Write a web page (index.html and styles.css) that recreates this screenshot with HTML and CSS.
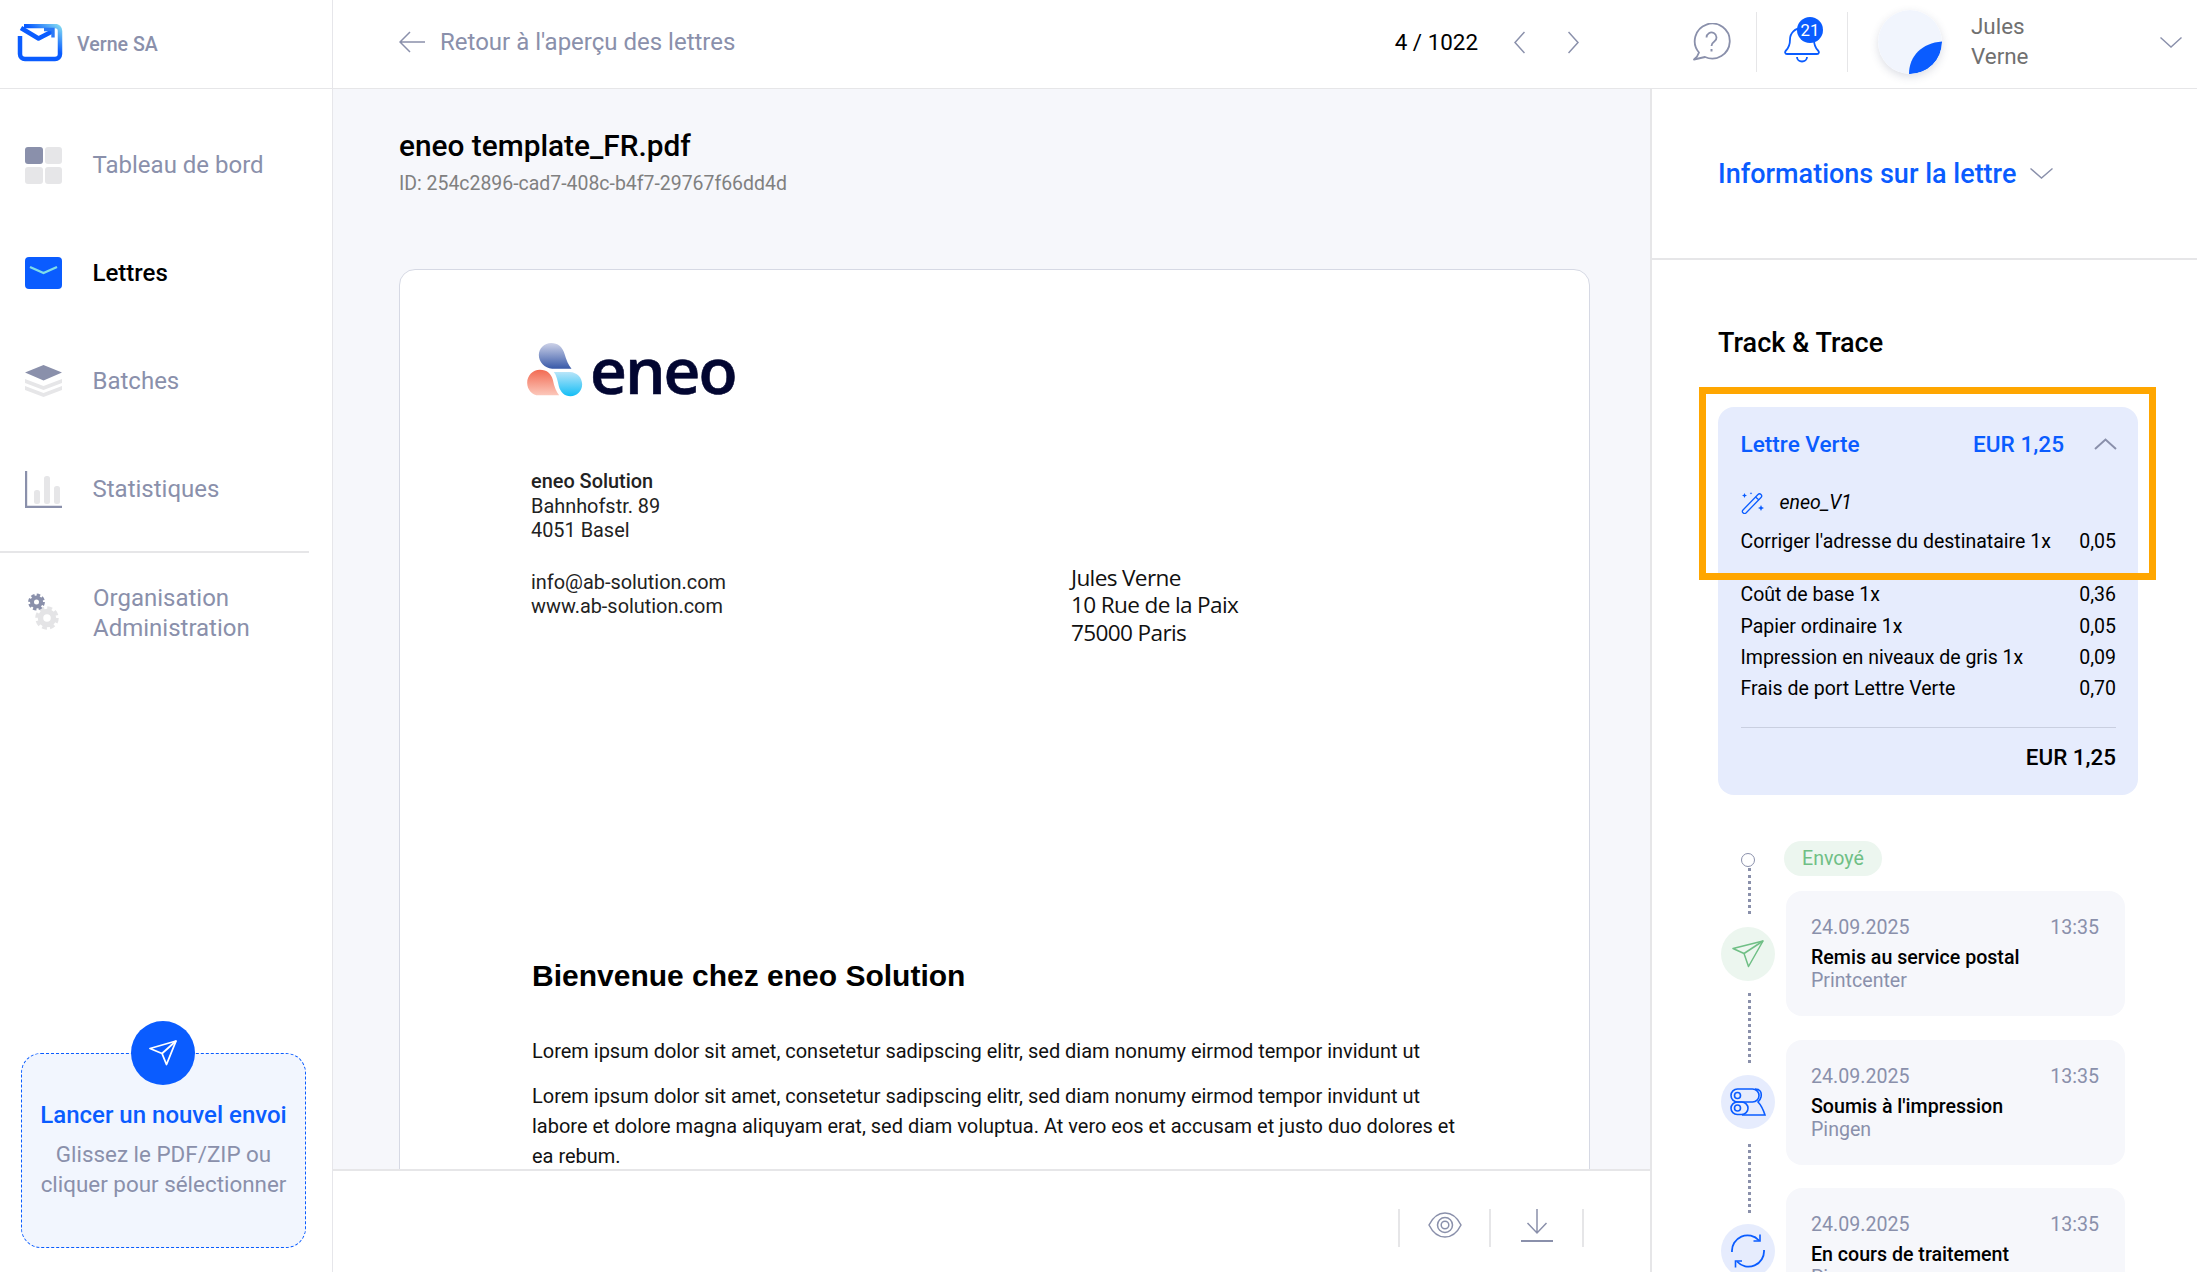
FILE: index.html
```html
<!DOCTYPE html>
<html lang="fr">
<head>
<meta charset="utf-8">
<title>Lettre</title>
<link rel="stylesheet" href="styles.css">
</head>
<body>
<div class="app">
  <aside class="sidebar">
    <div class="brand">
      <svg class="brand-logo" width="46" height="38" viewBox="0 0 46 38" fill="none">
        <defs><linearGradient id="lg" x1="0" y1="1" x2="1" y2="0"><stop offset=".6" stop-color="#0a5cff"/><stop offset="1" stop-color="#7fd6f2"/></linearGradient></defs>
        <path d="M3 12v18a5 5 0 0 0 5 5h30a5 5 0 0 0 5-5V7a5 5 0 0 0-5-5H7" stroke="url(#lg)" stroke-width="4.500"/>
        <path d="M4 4l17.500 10.500L36 7" stroke="#0a5cff" stroke-width="4.500" stroke-linejoin="round"/>
        <path d="M27 5.500h9v8" stroke="#2a78f5" stroke-width="3.400"/>
      </svg>
      <span class="brand-name">Verne SA</span>
    </div>
    <nav class="nav">
      <a class="nav-item">
        <svg class="nav-icon" width="37" height="37" viewBox="0 0 37 37"><rect width="18" height="17" rx="3" fill="#8a90ab"/><rect x="20" width="17" height="17" rx="3" fill="#e6e6e8"/><rect y="20" width="18" height="17" rx="3" fill="#e6e6e8"/><rect x="20" y="20" width="17" height="17" rx="3" fill="#e6e6e8"/></svg>
        <span>Tableau de bord</span>
      </a>
      <a class="nav-item active">
        <svg class="nav-icon" width="37" height="32" viewBox="0 0 37 32"><rect width="37" height="32" rx="4" fill="#0a5cff"/><path d="M5 10l13.500 6L32 10" fill="none" stroke="#7fdde8" stroke-width="2.400"/></svg>
        <span>Lettres</span>
      </a>
      <a class="nav-item">
        <svg class="nav-icon" width="37" height="32" viewBox="0 0 37 32"><path d="M0 14v4l18.500 7L37 18v-4l-18.500 7z" fill="#e6e6e8"/><path d="M0 21v4l18.500 7L37 25v-4l-18.500 7z" fill="#e6e6e8"/><path d="M18.500 0L37 7.500 18.500 15.500 0 7.500z" fill="#8a90ab"/></svg>
        <span>Batches</span>
      </a>
      <a class="nav-item">
        <svg class="nav-icon" width="37" height="37" viewBox="0 0 37 37"><rect x="9" y="19" width="6" height="14" rx="2.500" fill="#e6e6e8"/><rect x="19" y="5" width="6" height="28" rx="2.500" fill="#e6e6e8"/><rect x="29" y="15" width="6" height="18" rx="2.500" fill="#e6e6e8"/><path d="M1 0v36h36" fill="none" stroke="#8a90ab" stroke-width="2.400"/></svg>
        <span>Statistiques</span>
      </a>
    </nav>
    <div class="nav-divider"></div>
    <a class="nav-item org">
      <svg class="org-icon" width="31" height="37" viewBox="0 0 31 37" fill="none">
        <circle cx="19" cy="25" r="6.500" stroke="#e4e4e6" stroke-width="5.500"/><circle cx="19" cy="25" r="10" stroke="#e4e4e6" stroke-width="3.500" stroke-dasharray="4.800 3.050"/>
        <circle cx="8.500" cy="9" r="4.500" stroke="#8a90ab" stroke-width="4"/><circle cx="8.500" cy="9" r="7" stroke="#8a90ab" stroke-width="2.800" stroke-dasharray="3.400 2.100"/>
      </svg>
      <span>Organisation<br>Administration</span>
    </a>
    <div class="upload">
      <div class="upload-btn">
        <svg width="28" height="26" viewBox="0 0 28 26" fill="none" stroke="#fff" stroke-width="1.800" stroke-linejoin="round"><path d="M27 1L1 8.500l12 5 4.500 11z"/><path d="M27 1L13 13.500"/></svg>
      </div>
      <div class="upload-title">Lancer un nouvel envoi</div>
      <div class="upload-text">Glissez le PDF/ZIP ou cliquer pour sélectionner</div>
    </div>
  </aside>

  <div class="workspace">
    <header class="topbar">
      <a class="back">
        <svg width="26" height="22" viewBox="0 0 26 22" fill="none" stroke="#8a90ab" stroke-width="1.500"><path d="M26 11H1M11 1L1 11l10 10"/></svg>
        <span>Retour à l'aperçu des lettres</span>
      </a>
      <div class="pager">
        <span class="pager-count">4 / 1022</span>
        <svg width="11" height="23" viewBox="0 0 11 23" fill="none" stroke="#8a90ab" stroke-width="1.500"><path d="M10.500 1L1 11.500 10.500 22"/></svg>
        <svg class="pager-next" width="11" height="23" viewBox="0 0 11 23" fill="none" stroke="#8a90ab" stroke-width="1.500"><path d="M.5 1L10 11.500.5 22"/></svg>
      </div>
      <svg class="help" width="40" height="38" viewBox="0 0 40 38" fill="none" stroke="#8a90ab" stroke-width="1.800">
        <path d="M6 29.500A17.500 17.500 0 1 1 12 34l-11 2.500c2.500-2 4.200-4.300 5-7z" stroke-linejoin="round" transform="translate(2 0)"/>
        <path d="M15.500 14.500a5 5 0 1 1 7.800 4.100c-1.700 1.200-2.800 2.300-2.800 4.400"/><path d="M20.500 26v2.500" stroke-width="2"/>
      </svg>
      <div class="top-sep"></div>
      <div class="bell">
        <svg width="36" height="36" viewBox="0 0 36 36" fill="none" stroke="#0a5cff" stroke-width="1.800" stroke-linejoin="round"><path d="M3 27c-2 0-2.500-2-1-3.500 3-3 4-6 4-11C6 6 11 1 18 1s12 5 12 11.500c0 5 1 8 4 11 1.500 1.500 1 3.500-1 3.500z"/><path d="M13 30c0 6 10 6 10 0"/></svg>
        <span class="badge">21</span>
      </div>
      <div class="top-sep"></div>
      <svg class="avatar" width="64" height="64" viewBox="0 0 64 64"><circle cx="32" cy="32" r="32" fill="#f1f5fd"/><path d="M31 64C31 46 44 33 64 31.500A32 32 0 0 1 31 64z" fill="#0a5cff"/></svg>
      <div class="user-name">Jules<br>Verne</div>
      <svg width="22" height="11" viewBox="0 0 22 11" fill="none" stroke="#8a90ab" stroke-width="1.400"><path d="M.5.5L11 10 21.500.5"/></svg>
    </header>

    <div class="panes">
      <main class="center">
        <div class="center-scroll">
          <h1 class="file-name">eneo template_FR.pdf</h1>
          <div class="file-id">ID: 254c2896-cad7-408c-b4f7-29767f66dd4d</div>
          <article class="doc">
            <div class="doc-logo">
              <svg width="57" height="55" viewBox="80 65 170 165">
                <defs>
                  <linearGradient id="d1" x1="0" y1="0" x2="0" y2="1"><stop offset="0" stop-color="#cdd2e8"/><stop offset="1" stop-color="#3859a8"/></linearGradient>
                  <linearGradient id="d2" x1="0" y1="0" x2="0" y2="1"><stop offset="0" stop-color="#f26a52"/><stop offset="1" stop-color="#fcc8bb"/></linearGradient>
                  <linearGradient id="d3" x1="0" y1="0" x2="0" y2="1"><stop offset="0" stop-color="#b8e5f9"/><stop offset="1" stop-color="#12bdf5"/></linearGradient>
                </defs>
                <path d="M152 68C172 68 186 80 192 100C197 118 204 134 213 145L155 145C132 143 115 125 115 104C115 84 132 68 152 68Z" fill="url(#d1)"/>
                <path d="M118 148C140 148 152 160 157 178C161 200 168 215 176 225L115 225C95 225 80 208 80 187C80 165 97 148 118 148Z" fill="url(#d2)"/>
                <path d="M160 155L208 155C230 156 245 172 245 192C245 212 229 228 210 228C192 228 180 216 175 198C171 180 168 165 160 155Z" fill="url(#d3)"/>
              </svg>
              <span class="doc-logo-text">eneo</span>
            </div>
            <div class="doc-head">
              <div class="sender">
                <strong>eneo Solution</strong><br>Bahnhofstr. 89<br>4051 Basel
                <p class="sender-web">info@ab-solution.com<br>www.ab-solution.com</p>
              </div>
              <div class="recipient">Jules Verne<br>10 Rue de la Paix<br>75000 Paris</div>
            </div>
            <h2 class="doc-title">Bienvenue chez eneo Solution</h2>
            <p class="doc-para">Lorem ipsum dolor sit amet, consetetur sadipscing elitr, sed diam nonumy eirmod tempor invidunt ut</p>
            <p class="doc-para">Lorem ipsum dolor sit amet, consetetur sadipscing elitr, sed diam nonumy eirmod tempor invidunt ut labore et dolore magna aliquyam erat, sed diam voluptua. At vero eos et accusam et justo duo dolores et ea rebum.</p>
          </article>
        </div>
        <footer class="toolbar">
          <div class="tool tool-first">
            <svg width="34" height="26" viewBox="0 0 34 26" fill="none" stroke="#8a90ab" stroke-width="1.500"><path d="M1 13C5 5 11 1 17 1s12 4 16 12c-4 8-10 12-16 12S5 21 1 13z"/><circle cx="17" cy="13" r="7.500"/><circle cx="17" cy="13" r="3.800"/></svg>
          </div>
          <div class="tool tool-last">
            <svg width="32" height="33" viewBox="0 0 32 33" fill="none" stroke="#8a90ab" stroke-width="1.500"><path d="M16 0v24M6.500 14L16 24l9.500-10"/><path d="M0 32h32" stroke-width="2"/></svg>
          </div>
        </footer>
      </main>

      <aside class="details">
        <div class="info">
          <span class="info-title">Informations sur la lettre</span>
          <svg width="23" height="11" viewBox="0 0 23 11" fill="none" stroke="#8a90ab" stroke-width="1.400"><path d="M.5.5L11.500 10 22.500.5"/></svg>
        </div>
        <div class="track">
          <h2 class="track-title">Track &amp; Trace</h2>
          <section class="cost">
            <div class="highlight"></div>
            <div class="cost-head">
              <span class="cost-name">Lettre Verte</span>
              <span class="cost-price">EUR 1,25</span>
              <svg width="23" height="12" viewBox="0 0 23 12" fill="none" stroke="#8a90ab" stroke-width="2"><path d="M1 11L11.500 1.500 22 11"/></svg>
            </div>
            <div class="cost-tpl">
              <svg width="24" height="23" viewBox="0 0 24 23" fill="none" stroke="#0a5cff" stroke-width="1.300"><path d="M2 19L17 3.500c1-1 2-1 3 0s1 2 0 3L5 22c-1 .8-2 .8-3-.2s-.8-2 0-2.800z"/><path d="M14.500 6l3.500 3"/><path d="M3.500 2l.8 1.700 1.700.8-1.700.8-.8 1.700-.8-1.700L1 4.500l1.700-.8zM20 14l.9 2.100 2.100.9-2.100.9L20 20l-.9-2.100L17 17l2.100-.9zM10 1l.4.9.9.4-.9.4-.4.9-.4-.9-.9-.4.900-.4z" fill="#0a5cff" stroke="none"/></svg>
              <em>eneo_V1</em>
            </div>
            <div class="row row-first"><span>Corriger l'adresse du destinataire 1x</span><span>0,05</span></div>
            <div class="rows">
              <div class="row"><span>Coût de base 1x</span><span>0,36</span></div>
              <div class="row"><span>Papier ordinaire 1x</span><span>0,05</span></div>
              <div class="row"><span>Impression en niveaux de gris 1x</span><span>0,09</span></div>
              <div class="row"><span>Frais de port Lettre Verte</span><span>0,70</span></div>
            </div>
            <div class="cost-total">EUR 1,25</div>
          </section>

          <div class="timeline">
            <div class="rail">
              <div class="rail-dot"></div>
              <div class="rail-line line-a"></div>
              <div class="rail-icon green">
                <svg width="32" height="28" viewBox="0 0 32 28" fill="none" stroke="#6fbf85" stroke-width="1.500" stroke-linejoin="round"><path d="M31 1L1 8.500l11 5 4.500 13z"/><path d="M31 1L12 13.500"/></svg>
              </div>
              <div class="rail-line line-b"></div>
              <div class="rail-icon">
                <svg width="36" height="28" viewBox="0 0 36 28" fill="none" stroke="#0a5cff" stroke-width="1.600"><rect x="1" y="1" width="28" height="13" rx="6.500"/><rect x="1" y="14" width="17" height="12.500" rx="6.250"/><circle cx="7.500" cy="7.500" r="3"/><circle cx="7.500" cy="20" r="3"/><path d="M25 1c5 0 7 3 6 8-.5 2-1.500 3.500-3 5 3 3 5 7 7 13H12"/></svg>
              </div>
              <div class="rail-line line-c"></div>
              <div class="rail-icon">
                <svg width="34" height="34" viewBox="0 0 34 34" fill="none" stroke="#0a5cff" stroke-width="1.800"><path d="M1 18A15.500 15.500 0 0 1 28 6.500"/><path d="M33 16A15.500 15.500 0 0 1 6 27.500"/><path d="M29 .5V7h-6.500M4.500 33.500V27H11" stroke-width="1.600"/></svg>
              </div>
            </div>
            <div class="events">
              <span class="pill">Envoyé</span>
              <div class="event">
                <div class="event-top"><span>24.09.2025</span><span>13:35</span></div>
                <div class="event-title">Remis au service postal</div>
                <div class="event-sub">Printcenter</div>
              </div>
              <div class="event">
                <div class="event-top"><span>24.09.2025</span><span>13:35</span></div>
                <div class="event-title">Soumis à l'impression</div>
                <div class="event-sub">Pingen</div>
              </div>
              <div class="event">
                <div class="event-top"><span>24.09.2025</span><span>13:35</span></div>
                <div class="event-title">En cours de traitement</div>
                <div class="event-sub">Pingen</div>
              </div>
            </div>
          </div>
        </div>
      </aside>
    </div>
  </div>
</div>
</body>
</html>
```

FILE: styles.css
```css
* { box-sizing: border-box; }
html, body { margin: 0; height: 100%; overflow: hidden; }
body { font-family: Roboto, "Liberation Sans", sans-serif; font-size: 19.5px; color: #000; background: #fff; }
h1, h2, p { margin: 0; font-weight: inherit; }

.app { display: flex; height: 1272px; }

/* Sidebar */
.sidebar { width: 333px; flex: none; display: flex; flex-direction: column; border-right: 1px solid #e6e6ea; background: #fff; }
.brand { height: 89px; flex: none; display: flex; align-items: center; padding-left: 17px; border-bottom: 1px solid #e6e6e8; gap: 14px; }
.brand-logo { margin-top: -2px; }
.brand-name { font-size: 19.6px; font-weight: 500; color: #8a90ab; }
.nav { padding-top: 22px; }
.nav-item { height: 108px; display: flex; align-items: center; font-size: 24px; color: #8a90ab; padding-left: 25px; }
.nav-item span { margin-left: 30.500px; }
.nav-icon { flex: none; }
.nav-item.active { color: #000; font-weight: 500; }
.nav-divider { height: 2px; width: 309px; background: #e6e6e8; margin-top: 8px; }
.org { height: 120px; line-height: 30px; padding-left: 28px; }
.org span { margin-left: 34px; }
.org-icon { flex: none; margin-top: -4px; }
.upload { position: relative; margin: auto 0 24px 21px; width: 285px; height: 195px; border: 1.500px dashed #0a5cff; border-radius: 20px; background: #f2f6fe; text-align: center; padding-top: 45px; }
.upload-btn { position: absolute; left: 109px; top: -33px; width: 64px; height: 64px; border-radius: 50%; background: #0a5cff; display: flex; align-items: center; justify-content: center; }
.upload-title { font-size: 24px; line-height: 32px; font-weight: 500; color: #0a5cff; white-space: nowrap; }
.upload-text { font-size: 22.400px; line-height: 30px; color: #8a90ab; margin-top: 8px; padding: 0 8px; }

/* Workspace */
.workspace { flex: 1; min-width: 0; display: flex; flex-direction: column; }
.topbar { height: 89px; flex: none; display: flex; align-items: center; border-bottom: 1.500px solid #e6e6e8; padding: 0 15px 4px 66px; background: #fff; }
.back { flex: 1; display: flex; align-items: center; gap: 15px; font-size: 24px; color: #8a90ab; }
.pager { display: flex; align-items: center; }
.pager-count { font-size: 22.400px; margin-right: 36px; }
.pager-next { margin-left: 43px; }
.help { margin-left: 112px; margin-right: 25px; }
.top-sep { width: 1px; height: 60px; background: #e6e6e8; }
.bell { position: relative; width: 36px; height: 36px; margin: 6px 27px 0; }
.badge { position: absolute; left: 13px; top: -10px; width: 26px; height: 26px; border-radius: 50%; background: #0a5cff; color: #fff; font-size: 16.800px; line-height: 26px; text-align: center; }
.avatar { margin-left: 30px; border-radius: 50%; box-shadow: 0 3px 8px rgba(60, 70, 110, .18); }
.user-name { width: 189px; margin: -2px 0 0 29px; font-size: 22.400px; line-height: 30px; color: #707070; }

.panes { flex: 1; min-height: 0; display: flex; }
.center { width: 1319px; flex: none; display: flex; flex-direction: column; background: #fff; border-right: 2px solid #e6e6e8; }
.center-scroll { flex: 1; min-height: 0; overflow: hidden; background: #f6f7fb; padding: 37px 60px 0 66px; }
.file-name { font-size: 29.800px; line-height: 40px; font-weight: 500; }
.file-id { font-size: 19.450px; line-height: 26px; margin-top: 5px; color: #808080; }
.doc { margin-top: 72px; height: 1100px; background: #fff; border: 1.500px solid #d6d9e4; border-radius: 16px; padding: 72px 0 0 131px; }
.doc-logo { display: flex; align-items: center; height: 55px; margin-left: -4px; }
.doc-logo-text { font-family: "Open Sans", sans-serif; font-size: 64px; line-height: 55px; font-weight: 600; color: #020631; margin-left: 6px; letter-spacing: -2px; -webkit-text-stroke: .6px #020631; }
.doc-head { display: flex; margin-top: 73px; }
.sender { width: 540px; flex: none; font-size: 19.900px; line-height: 24.500px; color: #222; }
.sender strong { font-weight: 500; }
.sender-web { margin-top: 27px; }
.recipient { font-family: "Open Sans", sans-serif; font-size: 22.600px; line-height: 27.500px; margin-top: 93.500px; color: #111; letter-spacing: -.65px; }
.doc-title { font-family: "Liberation Sans", Arial, sans-serif; font-size: 30px; line-height: 36px; font-weight: 700; margin: 311.500px 0 0 1px; }
.doc-para { width: 935px; margin-left: 1px; font-size: 19.980px; line-height: 30.200px; color: #111; margin-bottom: 15px; }
.doc-title + .doc-para { margin-top: 42px; }
.toolbar { height: 103px; flex: none; display: flex; justify-content: flex-end; padding: 38px 66px 0 0; border-top: 2px solid #e6e6e8; background: #fff; }
.tool { height: 38px; display: flex; align-items: center; justify-content: center; border-left: 2px solid #e6e6e8; }
.tool svg { margin-top: -6px; }
.tool-first { width: 91px; }
.tool-last { width: 95px; border-right: 2px solid #e6e6e8; }

/* Details */
.details { flex: 1; min-width: 0; overflow: hidden; background: #fff; }
.info { height: 171px; display: flex; align-items: center; gap: 14px; padding-left: 66px; border-bottom: 2px solid #e6e6e8; }
.info-title { font-size: 27px; font-weight: 500; color: #0a5cff; }
.track { padding: 0 59px 0 66px; }
.track-title { font-size: 27px; line-height: 34px; font-weight: 500; margin-top: 66px; }
.cost { position: relative; margin-top: 47px; height: 388px; width: 420px; background: #e6ecfd; border-radius: 16px; padding: 21px 22px 0 22.500px; }
.highlight { position: absolute; left: -19px; top: -20px; width: 457px; height: 193px; border: 7.500px solid #ffa600; }
.cost-head { display: flex; align-items: center; height: 32px; color: #0a5cff; font-size: 22.600px; font-weight: 500; }
.cost-name { flex: 1; }
.cost-price { margin-right: 30px; }
.cost-head svg { margin-right: -1px; }
.cost-tpl { display: flex; align-items: center; gap: 15px; height: 24px; margin-top: 30px; }
.row { display: flex; justify-content: space-between; line-height: 31.300px; }
.row-first { margin-top: 12px; }
.rows { margin-top: 22px; padding-bottom: 23px; border-bottom: 1px solid #c9cfe0; }
.cost-total { font-size: 22.400px; line-height: 32px; font-weight: 500; text-align: right; margin-top: 13px; }

.timeline { display: flex; margin-top: 46px; }
.rail { width: 60px; flex: none; display: flex; flex-direction: column; align-items: center; padding-top: 12px; }
.rail-dot { width: 14px; height: 14px; border: 1.500px solid #8a90ab; border-radius: 50%; flex: none; }
.rail-line { width: 0; border-left: 3px dotted #8a90ab; flex: none; margin-left: 3px; }
.line-a { height: 46px; margin-top: 1px; margin-bottom: 13px; }
.line-b { height: 70px; margin-top: 12px; margin-bottom: 12px; }
.line-c { height: 69px; margin-top: 15px; margin-bottom: 11px; }
.rail-icon { width: 54px; height: 54px; flex: none; border-radius: 50%; background: #e6ecfd; display: flex; align-items: center; justify-content: center; }
.rail-icon.green { background: #ecf6ef; }
.events { flex: 1; min-width: 0; margin-left: 8px; width: 339px; display: flex; flex-direction: column; align-items: flex-start; gap: 23.500px; }
.pill { margin-left: -2px; margin-bottom: -8.500px; height: 35px; line-height: 35px; padding: 0 18px; border-radius: 18px; background: #ecf6ef; color: #6fbf85; font-size: 19.600px; }
.event { width: 339px; height: 125px; flex: none; background: #f6f7fb; border-radius: 16px; padding: 25px 26px 0 25px; }
.event-top { display: flex; justify-content: space-between; font-size: 19.600px; line-height: 24px; color: #8a90ab; }
.event-title { line-height: 24px; margin-top: 6px; font-weight: 500; font-size: 19.600px; }
.event-sub { line-height: 22px; font-size: 19.600px; color: #8a90ab; }
```
